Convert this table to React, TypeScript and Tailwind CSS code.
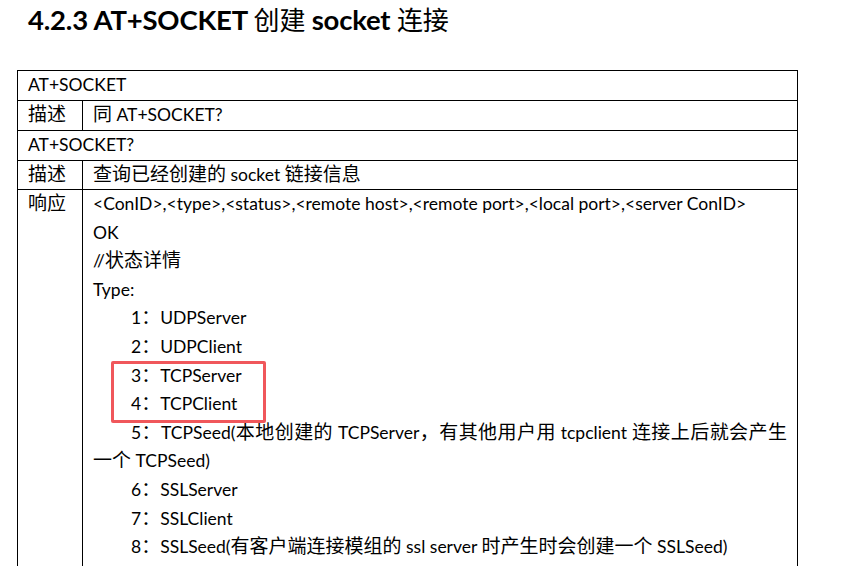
import React from "react";

const font = { fontFamily: 'Lato, "Noto Sans CJK SC", sans-serif' };

const cjkRe = /([\u3000-\u303f\u4e00-\u9fff\uff00-\uffef]+)/;

function T({ s, big }: { s: string; big?: boolean }) {
  const parts = s.split(cjkRe);
  return (
    <span>
      {parts.map((p, i) =>
        p === "" ? null : cjkRe.test(p) ? (
          <span key={i} className={big ? "text-[26px] font-normal leading-none" : "text-[19px] leading-none"}>
            {p}
          </span>
        ) : (
          <span key={i}>{p}</span>
        )
      )}
    </span>
  );
}

function Line({ children, className = "" }: { children: React.ReactNode; className?: string }) {
  return <div className={`h-[28.6px] leading-[28.6px] ${className}`}>{children}</div>;
}

function Item({ n, label }: { n: string; label: string }) {
  return (
    <Line className="pl-[38px]">
      <T s={`${n}：${label}`} />
    </Line>
  );
}

export default function App() {
  return (
    <div className="w-[842px] h-[566px] overflow-hidden bg-white text-black" style={font}>
      <h1 className="pl-[28px] pt-[2px] h-[70px] text-[27.5px] font-bold leading-[36px] tracking-[-0.2px]">
        <T s="4.2.3 AT+SOCKET 创建 socket 连接" big />
      </h1>
      <div className="ml-[17px] w-[781px] border border-black text-[17.5px]">
        <div className="h-[29px] flex items-center pl-[10px]">AT+SOCKET</div>
        <div className="h-[30px] flex border-t border-black">
          <div className="w-[65px] shrink-0 border-r border-black flex items-center pl-[10px]">
            <T s="描述" />
          </div>
          <div className="flex items-center pl-[10px]">
            <T s="同 AT+SOCKET?" />
          </div>
        </div>
        <div className="h-[30px] flex items-center pl-[10px] border-t border-black">AT+SOCKET?</div>
        <div className="h-[29px] flex border-t border-black">
          <div className="w-[65px] shrink-0 border-r border-black flex items-center pl-[10px]">
            <T s="描述" />
          </div>
          <div className="flex items-center pl-[10px]">
            <T s="查询已经创建的 socket 链接信息" />
          </div>
        </div>
        <div className="flex border-t border-black">
          <div className="w-[65px] shrink-0 border-r border-black pl-[10px]">
            <Line>
              <T s="响应" />
            </Line>
          </div>
          <div className="flex-1 pl-[10px] pr-[10px] pb-[40px] whitespace-nowrap">
            <Line>&lt;ConID&gt;,&lt;type&gt;,&lt;status&gt;,&lt;remote host&gt;,&lt;remote port&gt;,&lt;local port&gt;,&lt;server ConID&gt;</Line>
            <Line>OK</Line>
            <Line>
              <T s="//状态详情" />
            </Line>
            <Line>Type:</Line>
            <Item n="1" label="UDPServer" />
            <Item n="2" label="UDPClient" />
            <div className="relative">
              <div className="absolute left-[18px] top-[-1px] w-[155px] h-[62px] border-[3px] border-[#f0575b] rounded-[2px]" />
              <Item n="3" label="TCPServer" />
              <Item n="4" label="TCPClient" />
            </div>
            <Line className="pl-[38px] whitespace-normal [text-align-last:justify]">
              <T s="5：TCPSeed(本地创建的 TCPServer，有其他用户用 tcpclient 连接上后就会产生" />
            </Line>
            <Line>
              <T s="一个 TCPSeed)" />
            </Line>
            <Item n="6" label="SSLServer" />
            <Item n="7" label="SSLClient" />
            <Item n="8" label="SSLSeed(有客户端连接模组的 ssl server 时产生时会创建一个 SSLSeed)" />
          </div>
        </div>
      </div>
    </div>
  );
}
